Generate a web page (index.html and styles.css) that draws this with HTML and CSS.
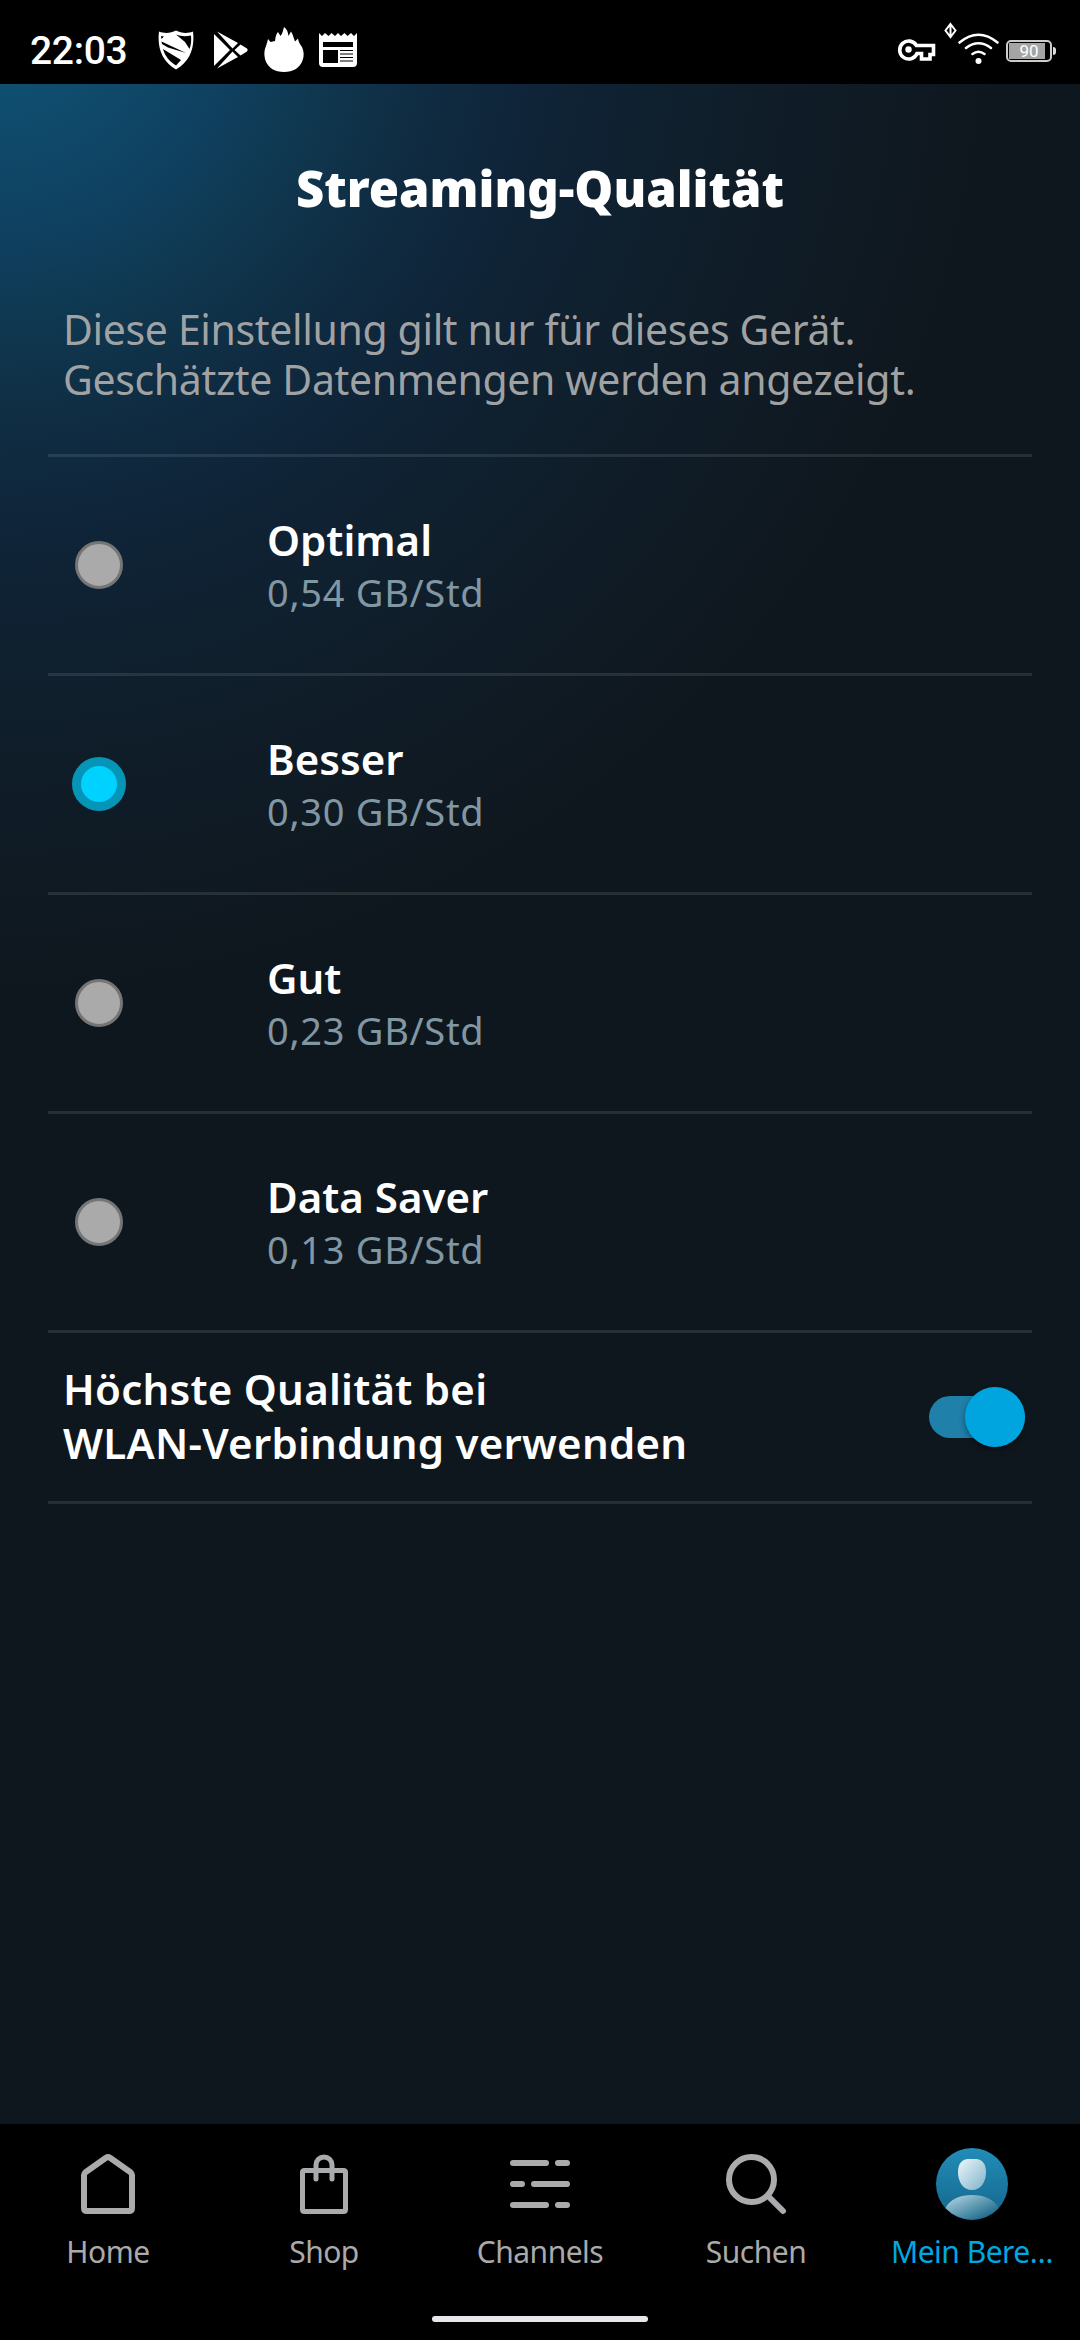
FILE: index.html
```html
<!DOCTYPE html>
<html lang="de">

<head>
    <meta charset="UTF-8">
    <meta name="viewport" content="width=device-width, initial-scale=1.0">
    <title>Streaming-Qualität</title>
    <link rel="stylesheet" href="styles.css">
</head>

<body>
    <div id="main">

        <div id="status">
            <span class="time">22:03</span>
            <svg class="shield" width="36" height="40" viewBox="0 0 36 40">
                <path d="M1 1.500C7 4 13 3 18 0.500C23 3 29 4 35 1.500C37 18 32 31 18 39.500C4 31-1 18 1 1.500Z" fill="#fff" />
                <path d="M18 4.500C23 6.500 28 6.500 33 5.500C33.500 11 33 15 31.500 19L27 12ZM3 6L6 6.500L3.500 9ZM3.500 11.500L28 23L10 17.500L4 14ZM5 19L23 30L18 35.500C11 31 7 26 5 19Z" fill="#000" />
            </svg>
            <svg class="play" width="36" height="38" viewBox="0 0 36 38">
                <path d="M1 3L17 19L1 35ZM4 0.500L25 12L19.500 17.500ZM27.500 13.500L34 17.500Q35.500 19 34 20.500L27.500 24.500L21.500 19ZM4 37.500L25 26L19.500 20.500Z" fill="#fff" />
            </svg>
            <svg class="flame" width="40" height="46" viewBox="0 0 40 46">
                <path d="M2 19C3 16 3.500 14 4 12L6.500 15L11 14C11.500 10 12 7 14 5L16.500 9C19 6 19 3 20 0C23 2 24 5 24.500 9L27 4.500C29 7 29.500 11 31 14.500L34 11.500C34.500 15 36 17 38 20C40 24 40 29 39 32C36.500 41 29 45 20 45C11 45 3.500 41 1 32C0 28 0 23 2 19Z" fill="#fff" />
            </svg>
            <svg class="news" width="38" height="36" viewBox="0 0 38 36">
                <path d="M0 1L3 4L6 1L9.500 4L12.500 1L16 4L19 1L22 4L25.500 1L28.500 4L32 1L35 4L38 1V31Q38 35 34 35H4Q0 35 0 31Z" fill="#fff" />
                <path d="M4 10H34V15H4ZM4 18H19V31H4ZM21 18H34V19H21ZM21 21.500H34V22.500H21ZM21 25H34V26H21ZM21 28.500H34V29.500H21Z" fill="#000" />
            </svg>
            <svg class="signals" width="104" height="46" viewBox="0 0 104 46">
                <!-- vpn key -->
                <path d="M19.500 23.500H36.500V32.500H33V37H24.500V31.500H20A9 9 0 1 1 19.500 23.500Z" fill="none" stroke="#fff" stroke-width="3.600" />
                <circle cx="11.500" cy="27.500" r="3.200" fill="#fff" />
                <!-- data arrows -->
                <path d="M53.500 2L58.500 8.500L53.500 15L48.500 8.500ZM53.500 3V15" fill="none" stroke="#fff" stroke-width="2" />
                <!-- wifi -->
                <path d="M62.500 20.500Q81.500 5 100.500 20.500M69 26Q81.500 16.500 94 26M75.500 32Q81.500 27.500 87.500 32" fill="none" stroke="#fff" stroke-width="2.600" stroke-linecap="round" />
                <circle cx="81.500" cy="39" r="3" fill="#fff" />
            </svg>
            <span class="battery">90</span>
        </div>

        <div id="content">
            <h1>Streaming-Qualität</h1>
            <p class="info">Diese Einstellung gilt nur für dieses Gerät.<br>Geschätzte Datenmengen werden angezeigt.</p>
            <ul id="quality">
                <li>
                    <i class="radio"></i>
                    <div>
                        <h2>Optimal</h2>
                        <p>0,54 GB/Std</p>
                    </div>
                </li>
                <li>
                    <i class="radio selected"></i>
                    <div>
                        <h2>Besser</h2>
                        <p>0,30 GB/Std</p>
                    </div>
                </li>
                <li>
                    <i class="radio"></i>
                    <div>
                        <h2>Gut</h2>
                        <p>0,23 GB/Std</p>
                    </div>
                </li>
                <li>
                    <i class="radio"></i>
                    <div>
                        <h2>Data Saver</h2>
                        <p>0,13 GB/Std</p>
                    </div>
                </li>
            </ul>
            <div id="wlan">
                <h2>Höchste Qualität bei<br>WLAN-Verbindung verwenden</h2>
                <div class="toggle"><i></i></div>
            </div>
        </div>

        <div id="nav">
            <ul>
                <li>
                    <svg width="72" height="72" viewBox="0 0 72 72">
                        <path d="M12 27Q12 25.500 13.500 24.300L34 9.800Q36 8.300 38 9.800L58.500 24.300Q60 25.500 60 27V60Q60 63 57 63H15Q12 63 12 60Z" />
                    </svg>
                    <span>Home</span>
                </li>
                <li>
                    <svg width="72" height="72" viewBox="0 0 72 72">
                        <path class="thin" d="M16.500 22.500H55.500Q57.500 22.500 57.500 24.500V61.500Q57.500 63.500 55.500 63.500H16.500Q14.500 63.500 14.500 61.500V24.500Q14.500 22.500 16.500 22.500ZM28 31V17A8 8 0 0 1 44 17V31" />
                    </svg>
                    <span>Shop</span>
                </li>
                <li>
                    <svg width="72" height="72" viewBox="0 0 72 72">
                        <path d="M9 15H42M54 15H63M9 36H18M30 36H63M9 57H42M54 57H63" />
                    </svg>
                    <span>Channels</span>
                </li>
                <li>
                    <svg width="72" height="72" viewBox="0 0 72 72">
                        <circle cx="31.500" cy="31.500" r="22.500" />
                        <path d="M48 48L63 63" />
                    </svg>
                    <span>Suchen</span>
                </li>
                <li class="active">
                    <svg width="72" height="72" viewBox="0 0 72 72">
                        <defs>
                            <linearGradient id="bg" x1="0" y1="0" x2="0" y2="1">
                                <stop offset="0" stop-color="#218db8" />
                                <stop offset="1" stop-color="#16658a" />
                            </linearGradient>
                            <linearGradient id="head" x1="0" y1="0" x2="1" y2="1">
                                <stop offset="0" stop-color="#eef6fa" />
                                <stop offset="1" stop-color="#7db3c9" />
                            </linearGradient>
                            <linearGradient id="body" x1="0" y1="0" x2="1" y2="1">
                                <stop offset="0.100" stop-color="#a9cddb" />
                                <stop offset="0.850" stop-color="#1c6a8c" />
                            </linearGradient>
                        </defs>
                        <g stroke="none">
                            <circle cx="36" cy="36" r="36" fill="url(#bg)" />
                            <path d="M32 11H40C46 11 50 16 50 24C50 34 45 42 36 42C27 42 22 34 22 24C22 16 26 11 32 11Z" fill="url(#head)" />
                            <path d="M9.500 60C14 51 24 47 36 47C48 47 58 51 62.500 60A36 36 0 0 1 9.500 60Z" fill="url(#body)" />
                        </g>
                    </svg>
                    <span>Mein Bere…</span>
                </li>
            </ul>
            <div class="handle"></div>
        </div>
    </div>
</body>

</html>
```
FILE: styles.css
```css
* {
    padding: 0;
    margin: 0;
    box-sizing: border-box;
}

body {
    font-family: "Noto Sans", "Open Sans", sans-serif;
    background: #000;
    color: #fff;
}

li {
    list-style: none;
}

svg {
    display: block;
    flex: none;
}

#main {
    width: 1080px;
    height: 2340px;
    display: flex;
    flex-direction: column;
    overflow: hidden;
    background: radial-gradient(circle 1080px at 0 0, #0f5779 0%, #0f4060 22%, #0f3850 30%, #0f2c42 40%, #0f2438 50%, #0f202e 62%, #0f1b25 78%, #0f171e 92%);
}

/* status bar */
#status {
    height: 84px;
    padding: 0 25px 0 30px;
    display: flex;
    align-items: flex-start;
    background: #000;
    font-family: Roboto, sans-serif;
}

.time {
    width: 128px;
    padding-top: 28px;
    font-size: 39px;
    line-height: 46px;
    font-weight: 500;
    letter-spacing: -0.3px;
}

.shield {
    margin-top: 30px;
}

.play {
    margin: 31px 0 0 19px;
}

.flame {
    margin: 27px 0 0 15px;
}

.news {
    margin: 32px 0 0 15px;
}

.signals {
    margin: 22px 5px 0 auto;
}

.battery {
    position: relative;
    width: 46px;
    height: 22px;
    margin: 40px 3px 0 0;
    border: 2px solid #ccc;
    border-radius: 5px;
    background: linear-gradient(#a5a5a5, #a5a5a5) 1px 1px / 36px 16px no-repeat;
    font-size: 17px;
    line-height: 19px;
    text-align: center;
}

.battery::after {
    content: "";
    position: absolute;
    left: 45px;
    top: 5px;
    width: 3px;
    height: 8px;
    border-radius: 0 3px 3px 0;
    background: #ddd;
}

/* settings */
#content {
    flex: 1;
    padding: 0 48px;
}

h1 {
    height: 206px;
    padding-top: 71px;
    font-size: 49px;
    line-height: 66px;
    font-weight: 900;
    text-align: center;
}

.info {
    height: 164px;
    padding: 14px 15px 0;
    font-size: 41px;
    line-height: 50px;
    letter-spacing: -0.36px;
    color: rgba(170, 170, 170, 0.94);
    white-space: nowrap;
}

#quality li {
    height: 219px;
    padding: 56px 0 0 24px;
    display: flex;
    border-top: 3px solid rgba(255, 255, 255, 0.1);
}

.radio {
    width: 48px;
    height: 48px;
    margin: 28px 144px 0 3px;
    border: 3px solid #757575;
    border-radius: 50%;
    background: #aaa;
}

.radio.selected {
    width: 54px;
    height: 54px;
    margin: 25px 141px 0 0;
    border: 9px solid #0695b6;
    background: #00d2ff;
}

h2 {
    font-size: 42px;
    line-height: 54px;
    font-weight: 600;
    white-space: nowrap;
}

#quality p {
    font-size: 38px;
    line-height: 50px;
    letter-spacing: 0.7px;
    color: #8197a4;
}

#wlan {
    height: 174px;
    padding: 0 7px 0 15px;
    display: flex;
    align-items: center;
    justify-content: space-between;
    border: solid rgba(255, 255, 255, 0.1);
    border-width: 3px 0;
}

#wlan h2 {
    padding-bottom: 2px;
    letter-spacing: 0.25px;
}

.toggle {
    width: 96px;
    height: 42px;
    border-radius: 21px;
    background: #1f80aa;
}

.toggle i {
    display: block;
    width: 60px;
    height: 60px;
    margin: -9px 0 0 36px;
    border-radius: 50%;
    background: #00a5df;
    box-shadow: 0 3px 6px rgba(0, 0, 0, 0.4);
}

/* bottom navigation */
#nav {
    height: 216px;
    background: #000;
}

#nav ul {
    height: 192px;
    padding-top: 24px;
    display: flex;
}

#nav li {
    width: 216px;
    display: flex;
    flex-direction: column;
    align-items: center;
    color: #aaa;
    font-size: 30px;
    line-height: 40px;
    letter-spacing: -0.5px;
}

#nav span {
    margin-top: 12px;
}

#nav svg {
    fill: none;
    stroke: #aaabad;
    stroke-width: 6;
    stroke-linecap: round;
    stroke-linejoin: round;
}

#nav .thin {
    stroke-width: 5;
}

#nav .active {
    color: #00a8e1;
}

.handle {
    width: 216px;
    height: 6px;
    margin: 0 auto;
    border-radius: 3px;
    background: #e8e6ea;
}
```
